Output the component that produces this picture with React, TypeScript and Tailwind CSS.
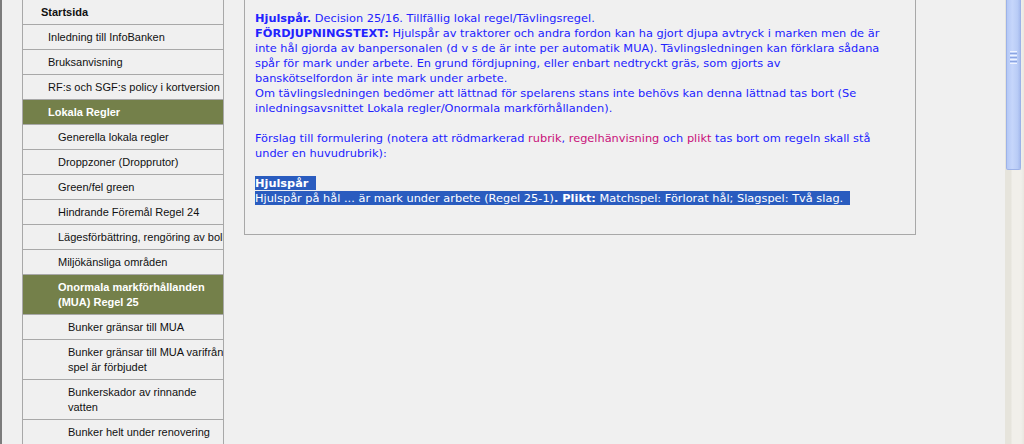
import React from 'react';

type Item = { label: React.ReactNode; level: number; active?: boolean; bold?: boolean };

const MENU: Item[] = [
  { label: 'Startsida', level: 0, bold: true },
  { label: 'Inledning till InfoBanken', level: 1 },
  { label: 'Bruksanvisning', level: 1 },
  { label: 'RF:s och SGF:s policy i kortversion', level: 1 },
  { label: 'Lokala Regler', level: 1, active: true },
  { label: 'Generella lokala regler', level: 2 },
  { label: 'Droppzoner (Dropprutor)', level: 2 },
  { label: 'Green/fel green', level: 2 },
  { label: 'Hindrande Föremål Regel 24', level: 2 },
  { label: 'Lägesförbättring, rengöring av boll', level: 2 },
  { label: 'Miljökänsliga områden', level: 2 },
  { label: <>Onormala markförhållanden<br />(MUA) Regel 25</>, level: 2, active: true },
  { label: 'Bunker gränsar till MUA', level: 3 },
  { label: <>Bunker gränsar till MUA varifrån<br />spel är förbjudet</>, level: 3 },
  { label: <>Bunkerskador av rinnande<br />vatten</>, level: 3 },
  { label: 'Bunker helt under renovering', level: 3 },
];

const indent = ['pl-[18px]', 'pl-[25px]', 'pl-[35px]', 'pl-[45px]'];

const Red = ({ children }: { children: React.ReactNode }) => (
  <span className="text-[#c8107a]">{children}</span>
);

export default function App() {
  return (
    <div className="flex h-[444px] w-[1024px] overflow-hidden bg-[#f0f0f0]">
      <div className="w-[2px] shrink-0 bg-[#7c7c7c]" />

      {/* Menu */}
      <div className="ml-[20px] w-[202px] shrink-0 border-x border-[#a8a8a8] font-['Liberation_Sans',Arial,sans-serif] text-[11px] leading-[15px]">
        {MENU.map((m, i) => (
          <div
            key={i}
            className={`overflow-hidden whitespace-nowrap border-b border-[#a8a8a8] pt-[5px] pb-[4px] ${indent[m.level]} ${
              m.active ? 'bg-[#74804a] font-bold text-white' : 'text-[#111]'
            } ${m.bold ? 'font-bold' : ''}`}
          >
            {m.label}
          </div>
        ))}
      </div>

      {/* Content */}
      <div className="ml-[20px] h-[235px] w-[672px] shrink-0 border-x border-b border-[#a8a8a8] pt-[11px] pl-[10px] font-['DejaVu_Sans',Verdana,sans-serif] text-[11.35px] leading-[15px] whitespace-nowrap text-[#2222ff]">
        <div>
          <b>Hjulspår.</b> Decision 25/16. Tillfällig lokal regel/Tävlingsregel.
        </div>
        <div>
          <b>FÖRDJUPNINGSTEXT:</b> Hjulspår av traktorer och andra fordon kan ha gjort djupa avtryck i marken men de är
        </div>
        <div>inte hål gjorda av banpersonalen (d v s de är inte per automatik MUA). Tävlingsledningen kan förklara sådana</div>
        <div>spår för mark under arbete. En grund fördjupning, eller enbart nedtryckt gräs, som gjorts av</div>
        <div>banskötselfordon är inte mark under arbete.</div>
        <div>Om tävlingsledningen bedömer att lättnad för spelarens stans inte behövs kan denna lättnad tas bort (Se</div>
        <div>inledningsavsnittet Lokala regler/Onormala markförhållanden).</div>
        <div className="h-[15px]" />
        <div>
          Förslag till formulering (notera att rödmarkerad <Red>rubrik</Red>, <Red>regelhänvisning</Red> och{' '}
          <Red>plikt</Red> tas bort om regeln skall stå
        </div>
        <div>under en huvudrubrik):</div>
        <div className="h-[15px]" />
        <div>
          <span className="bg-[#2a5cbf] font-bold text-white">Hjulspår&nbsp;&nbsp;</span>
        </div>
        <div>
          <span className="bg-[#2a5cbf] text-white">
            Hjulspår på hål ... är mark under arbete (Regel 25-1)<b>. Plikt:</b> Matchspel: Förlorat hål; Slagspel: Två slag.&nbsp;&nbsp;
          </span>
        </div>
      </div>

      <div className="flex-1" />

      {/* Scrollbar */}
      <div className="flex w-[19px] shrink-0 bg-[linear-gradient(to_right,#e6e4dc_0px,#e6e4dc_6px,#f1efea_7px,#f1efea_16px,#e9e7e0_19px)]">
        <div className="ml-[1px] flex h-[170px] w-[15px] items-start justify-center rounded-b-[2px] border border-t-0 border-[#9db2e8] bg-[linear-gradient(to_right,#b4c8f6,#c6d6fb_40%,#b9ccf6_80%,#a7bbee)] pt-[51px]">
          <div className="flex w-[7px] flex-col gap-[1px]">
            <div className="h-[1px] bg-[#eef3ff]" />
            <div className="h-[1px] bg-[#8ca5e2]" />
            <div className="h-[1px] bg-[#eef3ff]" />
            <div className="h-[1px] bg-[#8ca5e2]" />
            <div className="h-[1px] bg-[#eef3ff]" />
            <div className="h-[1px] bg-[#8ca5e2]" />
            <div className="h-[1px] bg-[#eef3ff]" />
          </div>
        </div>
      </div>
    </div>
  );
}
